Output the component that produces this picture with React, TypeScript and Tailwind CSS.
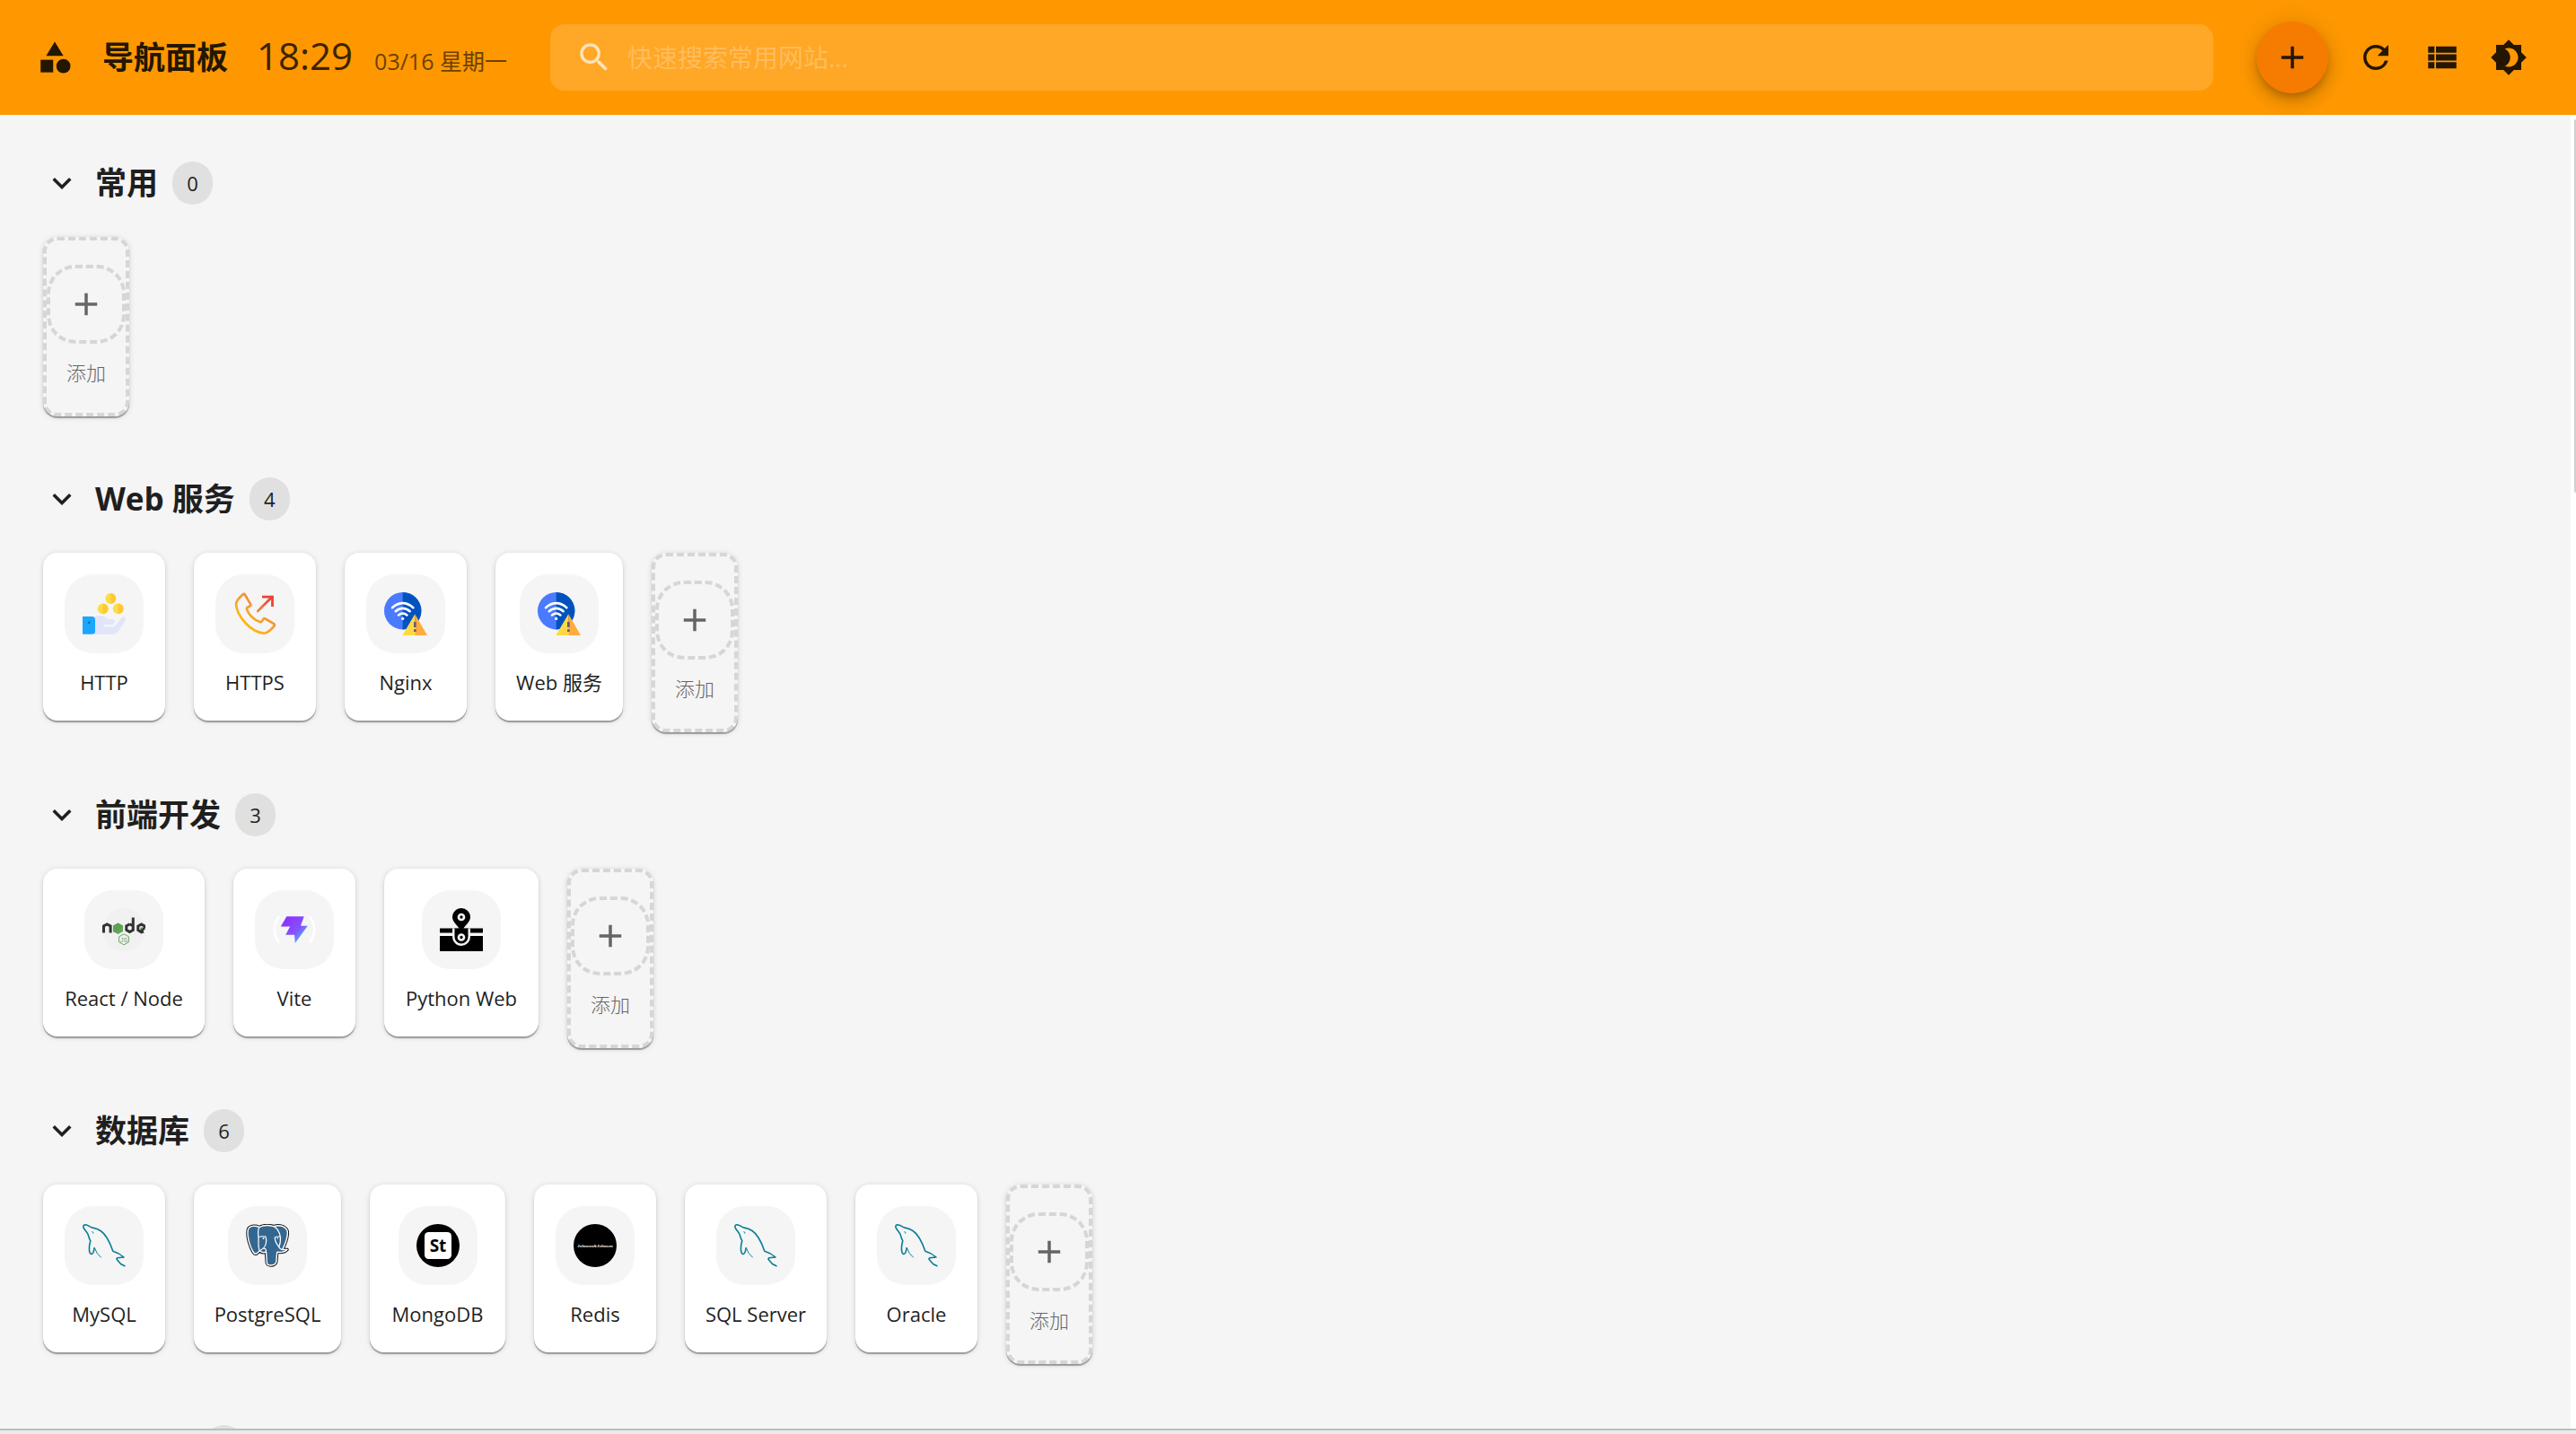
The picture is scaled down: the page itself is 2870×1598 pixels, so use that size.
import { useState } from 'react';
import type { ComponentType } from 'react';
import { MdAdd, MdBrightness4, MdCategory, MdExpandMore, MdRefresh, MdSearch, MdViewList } from 'react-icons/md';

function PaymentIcon() {
  return (
    <svg viewBox="0 0 48 48" className="size-12">
      <g fill="#ffdb45">
        <circle cx="31.3" cy="7" r="5.9" />
        <circle cx="22.7" cy="18.3" r="5.9" />
        <circle cx="39.7" cy="18.3" r="5.9" />
      </g>
      <g fill="#ffc933">
        <path d="M31.3 1.1a5.9 5.9 0 0 1 0 11.8z" />
        <path d="M22.7 12.4a5.9 5.9 0 0 1 0 11.8z" />
        <path d="M39.7 12.4a5.9 5.9 0 0 1 0 11.8z" />
      </g>
      <path
        d="M13 28c4-3 11-2.800 14.500 2h5.500a2.600 2.600 0 0 1 2 4.600l-1.500 1.400H24.500a1.200 1.200 0 0 0 0 2.600H35.500l7.800-10c2-2.200 6-.5 4.500 2.600l-8 12.300q-2.300 3.200-6 3.200H13z"
        fill="#e2e4fb"
      />
      <path d="M0 27h10.500q3.500 0 3.500 3.500v13q0 3.300-3.500 3.300H0z" fill="#1aa7ff" />
      <circle cx="7.200" cy="33.800" r="1.500" fill="#1573b5" />
    </svg>
  );
}

function CallIcon() {
  return (
    <svg viewBox="0 0 48 48" className="size-12" fill="none" strokeWidth="2.7">
      <defs>
        <linearGradient id="call-body" x1="8" y1="36" x2="30" y2="12" gradientUnits="userSpaceOnUse">
          <stop offset="0" stopColor="#fdc00a" />
          <stop offset="1" stopColor="#f08a45" />
        </linearGradient>
        <linearGradient id="call-arrow" x1="27" y1="21" x2="44" y2="4" gradientUnits="userSpaceOnUse">
          <stop offset="0" stopColor="#f08a45" />
          <stop offset="0.8" stopColor="#ea4335" />
        </linearGradient>
      </defs>
      <path
        d="M12.800 2.500q-1-1.200-2.500 0.200C6 6.500 3.500 10 3 12.500 3.500 27 20 45 34.500 45.800c4-.8 7.500-4.300 10.800-8q1.200-1.600-.3-2.800L35.500 29.500q-1.500-.8-2.300.6l-1.500 2.400q-.8 1-2.200.5C23 31 17 25 15 19q-.5-1.300.6-2l2.800-1.500q1.500-.8.8-2.200z"
        stroke="url(#call-body)"
      />
      <path d="M27.200 21 43 5.200" stroke="url(#call-arrow)" strokeLinecap="round" />
      <path d="M32 5.200h11.500V16" stroke="#ea4335" strokeWidth="2.800" />
    </svg>
  );
}

function WifiWarningIcon() {
  return (
    <svg viewBox="0 0 48 48" className="size-12">
      <circle cx="20.700" cy="20.700" r="20.700" fill="#4a7aff" />
      <path d="M20.700 0a20.700 20.700 0 0 1 0 41.400z" fill="#0053bf" />
      <g fill="none" stroke="#fff" strokeWidth="2.600" strokeLinecap="round">
        <path d="M9 17.200q11.700-10 23.400 0" />
        <path d="M12.700 21.200q8-6.800 16 0" />
        <path d="M16 25.400q4.700-3.800 9.400 0" />
      </g>
      <circle cx="20.700" cy="29.400" r="1.600" fill="#fff" />
      <path d="M34.300 24.300V48h-14z" fill="#ffd945" />
      <path d="M34.300 24.300V48H48z" fill="#ffac3e" />
      <path d="M33 33h2.700v6H33zM33 41.300h2.700v2.700H33z" fill="#685e68" />
    </svg>
  );
}

function NodeIcon() {
  return (
    <svg viewBox="0 0 48 48" className="size-12">
      <circle cx="24" cy="24" r="24" fill="#f1f1f1" />
      <g fill="none" stroke="#333" strokeWidth="3">
        <path d="M1.500 27.500v-7.500l3.800-2 3.800 2v7.500" />
        <path d="m30.500 17.800-3.700 2.100v4.500l3.700 2.100 3.800-2.100V10.500M30.500 17.800l3.800 2.100" />
        <path d="m47 22.500-4 2.300M46 26l-2.500.8-3.700-2.300v-4.500l3.700-2.100 3.500 2v2.600" />
      </g>
      <path d="m17.500 16.500 5.500 3.100v6.300L17.500 29 12 25.900v-6.300z" fill="#6aa35c" />
      <path d="m17.500 16.500 5.500 3.100-8 8L12 25.900v-6.300z" fill="#57a04d" opacity="0.6" />
      <circle cx="43.800" cy="22.500" r="1.200" fill="#57a04d" />
      <path d="m24 28.800 5.400 3v6L24 40.900l-5.400-3.100v-6z" fill="none" stroke="#6aa860" strokeWidth="1" />
      <text
        x="24"
        y="37.500"
        textAnchor="middle"
        fontSize="7"
        fill="#6aa860"
        className="font-['Liberation_Sans',sans-serif]"
      >
        JS
      </text>
    </svg>
  );
}

function ViteIcon() {
  return (
    <svg viewBox="0 0 48 48" className="size-12">
      <defs>
        <linearGradient id="bolt" x1="18" y1="12" x2="38" y2="30" gradientUnits="userSpaceOnUse">
          <stop offset="0" stopColor="#8b36ff" />
          <stop offset="0.6" stopColor="#8455ff" />
          <stop offset="0.9" stopColor="#4fa8ff" />
        </linearGradient>
      </defs>
      <g fill="none" stroke="#fff" strokeWidth="2.600">
        <path d="M7 9.500q-10.500 14.500 0 29" />
        <path d="M41 9.500q10.500 14.500 0 29" />
      </g>
      <path
        d="M15.300 9.300h19.400L31 19.700h7.800L24.800 39l-.7-9.300h-9.800l4.800-9.200H8.800z"
        fill="url(#bolt)"
      />
    </svg>
  );
}

function TreasureIcon() {
  return (
    <svg viewBox="0 0 48 48" className="size-12">
      <path d="M0 22.500h48v5H0zM0 31h48v17H0z" />
      <path d="M14 22.500h20V32a10 10 0 0 1-20 0z" fill="#f4f4f4" />
      <path d="M16.500 22.500h15V32a7.500 7.500 0 0 1-15 0z" />
      <path d="M24 0a10 10 0 0 1 10 10c0 5-5 8.500-7.800 13h-4.400C19 18.500 14 15 14 10A10 10 0 0 1 24 0z" />
      <g fill="none" stroke="#f4f4f4" strokeWidth="2.700">
        <circle cx="24" cy="10" r="3" />
        <circle cx="24" cy="32.500" r="3" />
      </g>
    </svg>
  );
}

function DolphinIcon() {
  return (
    <svg viewBox="0 0 48 48" className="size-12" fill="none" stroke="#087e97" strokeLinejoin="round">
      <path
        d="M47.500 47l-5-2.500-4.500-5.200.5-1.500 7.500-.8q-5-4.500-12.200-6.700C31 22 27 12 20 7.500 16.500 5 13 4.500 10.500 4 7.500 2.500 5 .8 3 .8.600 1 .300 3 1.600 5c1.500 2.500 3.600 4.500 4.600 7 .9 2.400 1 4.600 2.600 6.800C7.500 23 7 28 8 31.800c.6 1.700 2.300 2.300 3.700.3.900-1.800 1-4 1.600-5.800"
        strokeWidth="1.600"
      />
      <path d="M13.300 26.300q2 7 7.400 11" strokeWidth="1" />
      <path d="M10.500 8.200q2 .5 1.500 2.500z" fill="#087e97" strokeWidth="0.400" />
    </svg>
  );
}

const ELEPHANT_HEAD =
  'M15 3.500C10 1.300 3.500 1.800 2.300 6.500c-1.400 7 2 19 6 25 1.500 2.200 3 2.300 4.500.8l2.500-2.500c1.500 1.800 4 2.300 7.200 1.500l.8 12c.7 3.700 8.500 3.700 10.300-.5.800-3 .5-7.500 1.200-11.500 4 .6 8.500 0 11.200-2.800-1.500-.4-3.500.2-5.500-.2 4-6.500 6.500-15.500 5.700-20.500C44 2 37 .6 31 2.600 26 1.300 19 1.300 15 3.500z';

function ElephantIcon() {
  return (
    <svg viewBox="0 0 48 48" className="size-12" strokeLinejoin="round" strokeLinecap="round">
      <path d={ELEPHANT_HEAD} fill="#111" stroke="#111" strokeWidth="3.400" />
      <path d={ELEPHANT_HEAD} fill="#336791" stroke="#fff" strokeWidth="1.400" />
      <g fill="none" stroke="#fff" strokeWidth="1.200">
        <path d="M15 3.500C12.500 7 14 12 14 17c0 4-.5 9.500 1.300 12.700 3-1.500 7-5 7-8.500.6-2.700.4-5-.3-7q-4-1-8 .3" />
        <path d="M31 2.600c4 2 6.500 7 7.300 11.500-2-.3-4 0-6 .7-.5 4.500 2 7.500 4.500 11 .8 1.300 1.500 2.500 3.500 2.900M38.300 14.100c.5 5-.3 9-1.500 11.700" />
        <path d="M22.500 31.300c.2-3-1-4.800-3.500-4" />
      </g>
      <circle cx="19.500" cy="16" r="0.900" fill="#fff" />
      <circle cx="35.200" cy="16" r="0.800" fill="#fff" />
    </svg>
  );
}

function StockIcon() {
  return (
    <svg viewBox="0 0 48 48" className="size-12">
      <circle cx="24" cy="24" r="24" />
      <rect x="9" y="9" width="30" height="30" rx="4.500" fill="#fff" />
      <text
        x="24"
        y="30.800"
        textAnchor="middle"
        fontSize="19"
        fontWeight="700"
        className="font-['Open_Sans',sans-serif]"
      >
        St
      </text>
    </svg>
  );
}

function JohnsonIcon() {
  return (
    <svg viewBox="0 0 48 48" className="size-12">
      <circle cx="24" cy="24" r="24" />
      <text
        x="24"
        y="25.500"
        textAnchor="middle"
        fontSize="5"
        fontStyle="italic"
        fontWeight="700"
        fill="#fff"
        className="font-['Liberation_Serif',serif]"
      >
        Johnson&amp;Johnson
      </text>
    </svg>
  );
}

interface Site {
  name: string;
  icon: ComponentType;
  width: string;
}

interface Group {
  title: string;
  sites: Site[];
}

const GROUPS: Group[] = [
  { title: '常用', sites: [] },
  {
    title: 'Web 服务',
    sites: [
      { name: 'HTTP', icon: PaymentIcon, width: 'w-[136px]' },
      { name: 'HTTPS', icon: CallIcon, width: 'w-[136px]' },
      { name: 'Nginx', icon: WifiWarningIcon, width: 'w-[136px]' },
      { name: 'Web 服务', icon: WifiWarningIcon, width: 'w-[142px]' },
    ],
  },
  {
    title: '前端开发',
    sites: [
      { name: 'React / Node', icon: NodeIcon, width: 'w-[180px]' },
      { name: 'Vite', icon: ViteIcon, width: 'w-[136px]' },
      { name: 'Python Web', icon: TreasureIcon, width: 'w-[172px]' },
    ],
  },
  {
    title: '数据库',
    sites: [
      { name: 'MySQL', icon: DolphinIcon, width: 'w-[136px]' },
      { name: 'PostgreSQL', icon: ElephantIcon, width: 'w-[164px]' },
      { name: 'MongoDB', icon: StockIcon, width: 'w-[151px]' },
      { name: 'Redis', icon: JohnsonIcon, width: 'w-[136px]' },
      { name: 'SQL Server', icon: DolphinIcon, width: 'w-[158px]' },
      { name: 'Oracle', icon: DolphinIcon, width: 'w-[136px]' },
    ],
  },
];

const CARD_SHADOW = 'shadow-[0_2px_1px_0_rgba(0,0,0,0.32),0_1px_6px_0_rgba(0,0,0,0.14)]';

function SiteCard({ name, icon: Icon, width }: Site) {
  return (
    <a href="#" className={`flex flex-col items-center rounded-2xl bg-white pt-6 pb-[26px] ${width} ${CARD_SHADOW}`}>
      <span className="flex size-[88px] items-center justify-center rounded-[32px] bg-[#f5f5f5]">
        <Icon />
      </span>
      <span className="mt-4 text-[22px] leading-[33px] whitespace-nowrap">{name}</span>
    </a>
  );
}

function AddCard() {
  return (
    <button
      className={`flex w-24 flex-col items-center rounded-2xl border-4 border-dashed border-[#d6d6d6] bg-[#f5f5f5] pt-[27px] pb-7 text-[#666] ${CARD_SHADOW}`}
    >
      <span className="flex size-[88px] items-center justify-center rounded-[32px] border-4 border-dashed border-[#d6d6d6]">
        <MdAdd size={42} />
      </span>
      <span className="mt-4 text-[22px] leading-[33px] font-light">添加</span>
    </button>
  );
}

function GroupSection({ title, sites }: Group) {
  const [open, setOpen] = useState(true);

  return (
    <section className="pb-[68px]">
      <div className="flex h-12 items-center gap-4">
        <button aria-label={title} aria-expanded={open} onClick={() => setOpen(!open)}>
          <MdExpandMore size={42} className={open ? '' : '-rotate-90'} />
        </button>
        <h2 className="text-[35px] leading-[48px] font-bold whitespace-nowrap">{title}</h2>
        <span className="flex h-12 w-[45px] items-center justify-center rounded-[24px] bg-[#e0e0e0] text-[22px]">
          {sites.length}
        </span>
      </div>
      {open && (
        <div className="mt-9 flex flex-wrap items-start gap-8">
          {sites.map((site) => (
            <SiteCard key={site.name} {...site} />
          ))}
          <AddCard />
        </div>
      )}
    </section>
  );
}

export default function App() {
  return (
    <div className="flex h-screen flex-col overflow-hidden bg-[#f5f5f5] font-['Open_Sans','Noto_Sans_CJK_SC',sans-serif] text-[#1f1f1f]">
      <header className="flex h-32 shrink-0 items-center bg-[#ff9800] pr-[54px] pl-10 text-[#241600]">
        <MdCategory size={42} className="shrink-0" />
        <h1 className="ml-8 text-[35px] font-bold whitespace-nowrap">导航面板</h1>
        <div className="ml-8 flex items-baseline gap-6 pb-1.5 whitespace-nowrap">
          <time className="text-[42px] text-[#3b2400]">18:29</time>
          <span className="text-[25px] text-[#6b4103]">03/16 星期一</span>
        </div>

        <label className="ml-12 flex h-[74px] flex-1 items-center gap-4 rounded-2xl bg-[#ffa726] px-7">
          <MdSearch size={42} className="text-[#ffe3b8]" />
          <input
            type="search"
            aria-label="搜索"
            placeholder="快速搜索常用网站..."
            className="flex-1 bg-transparent text-[28px] outline-none placeholder:text-[#ffbd5e]"
          />
        </label>

        <button
          aria-label="添加"
          className="ml-12 flex size-20 items-center justify-center rounded-full bg-[#f57c00] shadow-[0_5px_9px_-2px_rgba(0,0,0,0.2),0_10px_18px_0_rgba(0,0,0,0.14),0_2px_32px_0_rgba(0,0,0,0.12)]"
        >
          <MdAdd size={42} />
        </button>
        <div className="ml-8 flex gap-8">
          <button aria-label="刷新">
            <MdRefresh size={42} />
          </button>
          <button aria-label="列表视图">
            <MdViewList size={42} />
          </button>
          <button aria-label="切换主题">
            <MdBrightness4 size={42} />
          </button>
        </div>
      </header>

      <div className="flex min-h-0 flex-1">
        <main className="flex-1 overflow-hidden px-12 pt-[52px]">
          {GROUPS.map((group) => (
            <GroupSection key={group.title} {...group} />
          ))}
          <div className="flex h-12 pl-[179px]">
            <span className="h-12 w-[45px] rounded-[24px] bg-[#e0e0e0]" />
          </div>
        </main>
        {/* Scroll track */}
        <div className="flex w-[6px] justify-end bg-white pt-[5px]">
          <div className="h-[416px] w-[2px] rounded-l-sm bg-[#cfcfcf]" />
        </div>
      </div>

      <footer className="h-[6px] shrink-0 border-t-2 border-[#bdbdbd] bg-[#ebebeb]" />
    </div>
  );
}
